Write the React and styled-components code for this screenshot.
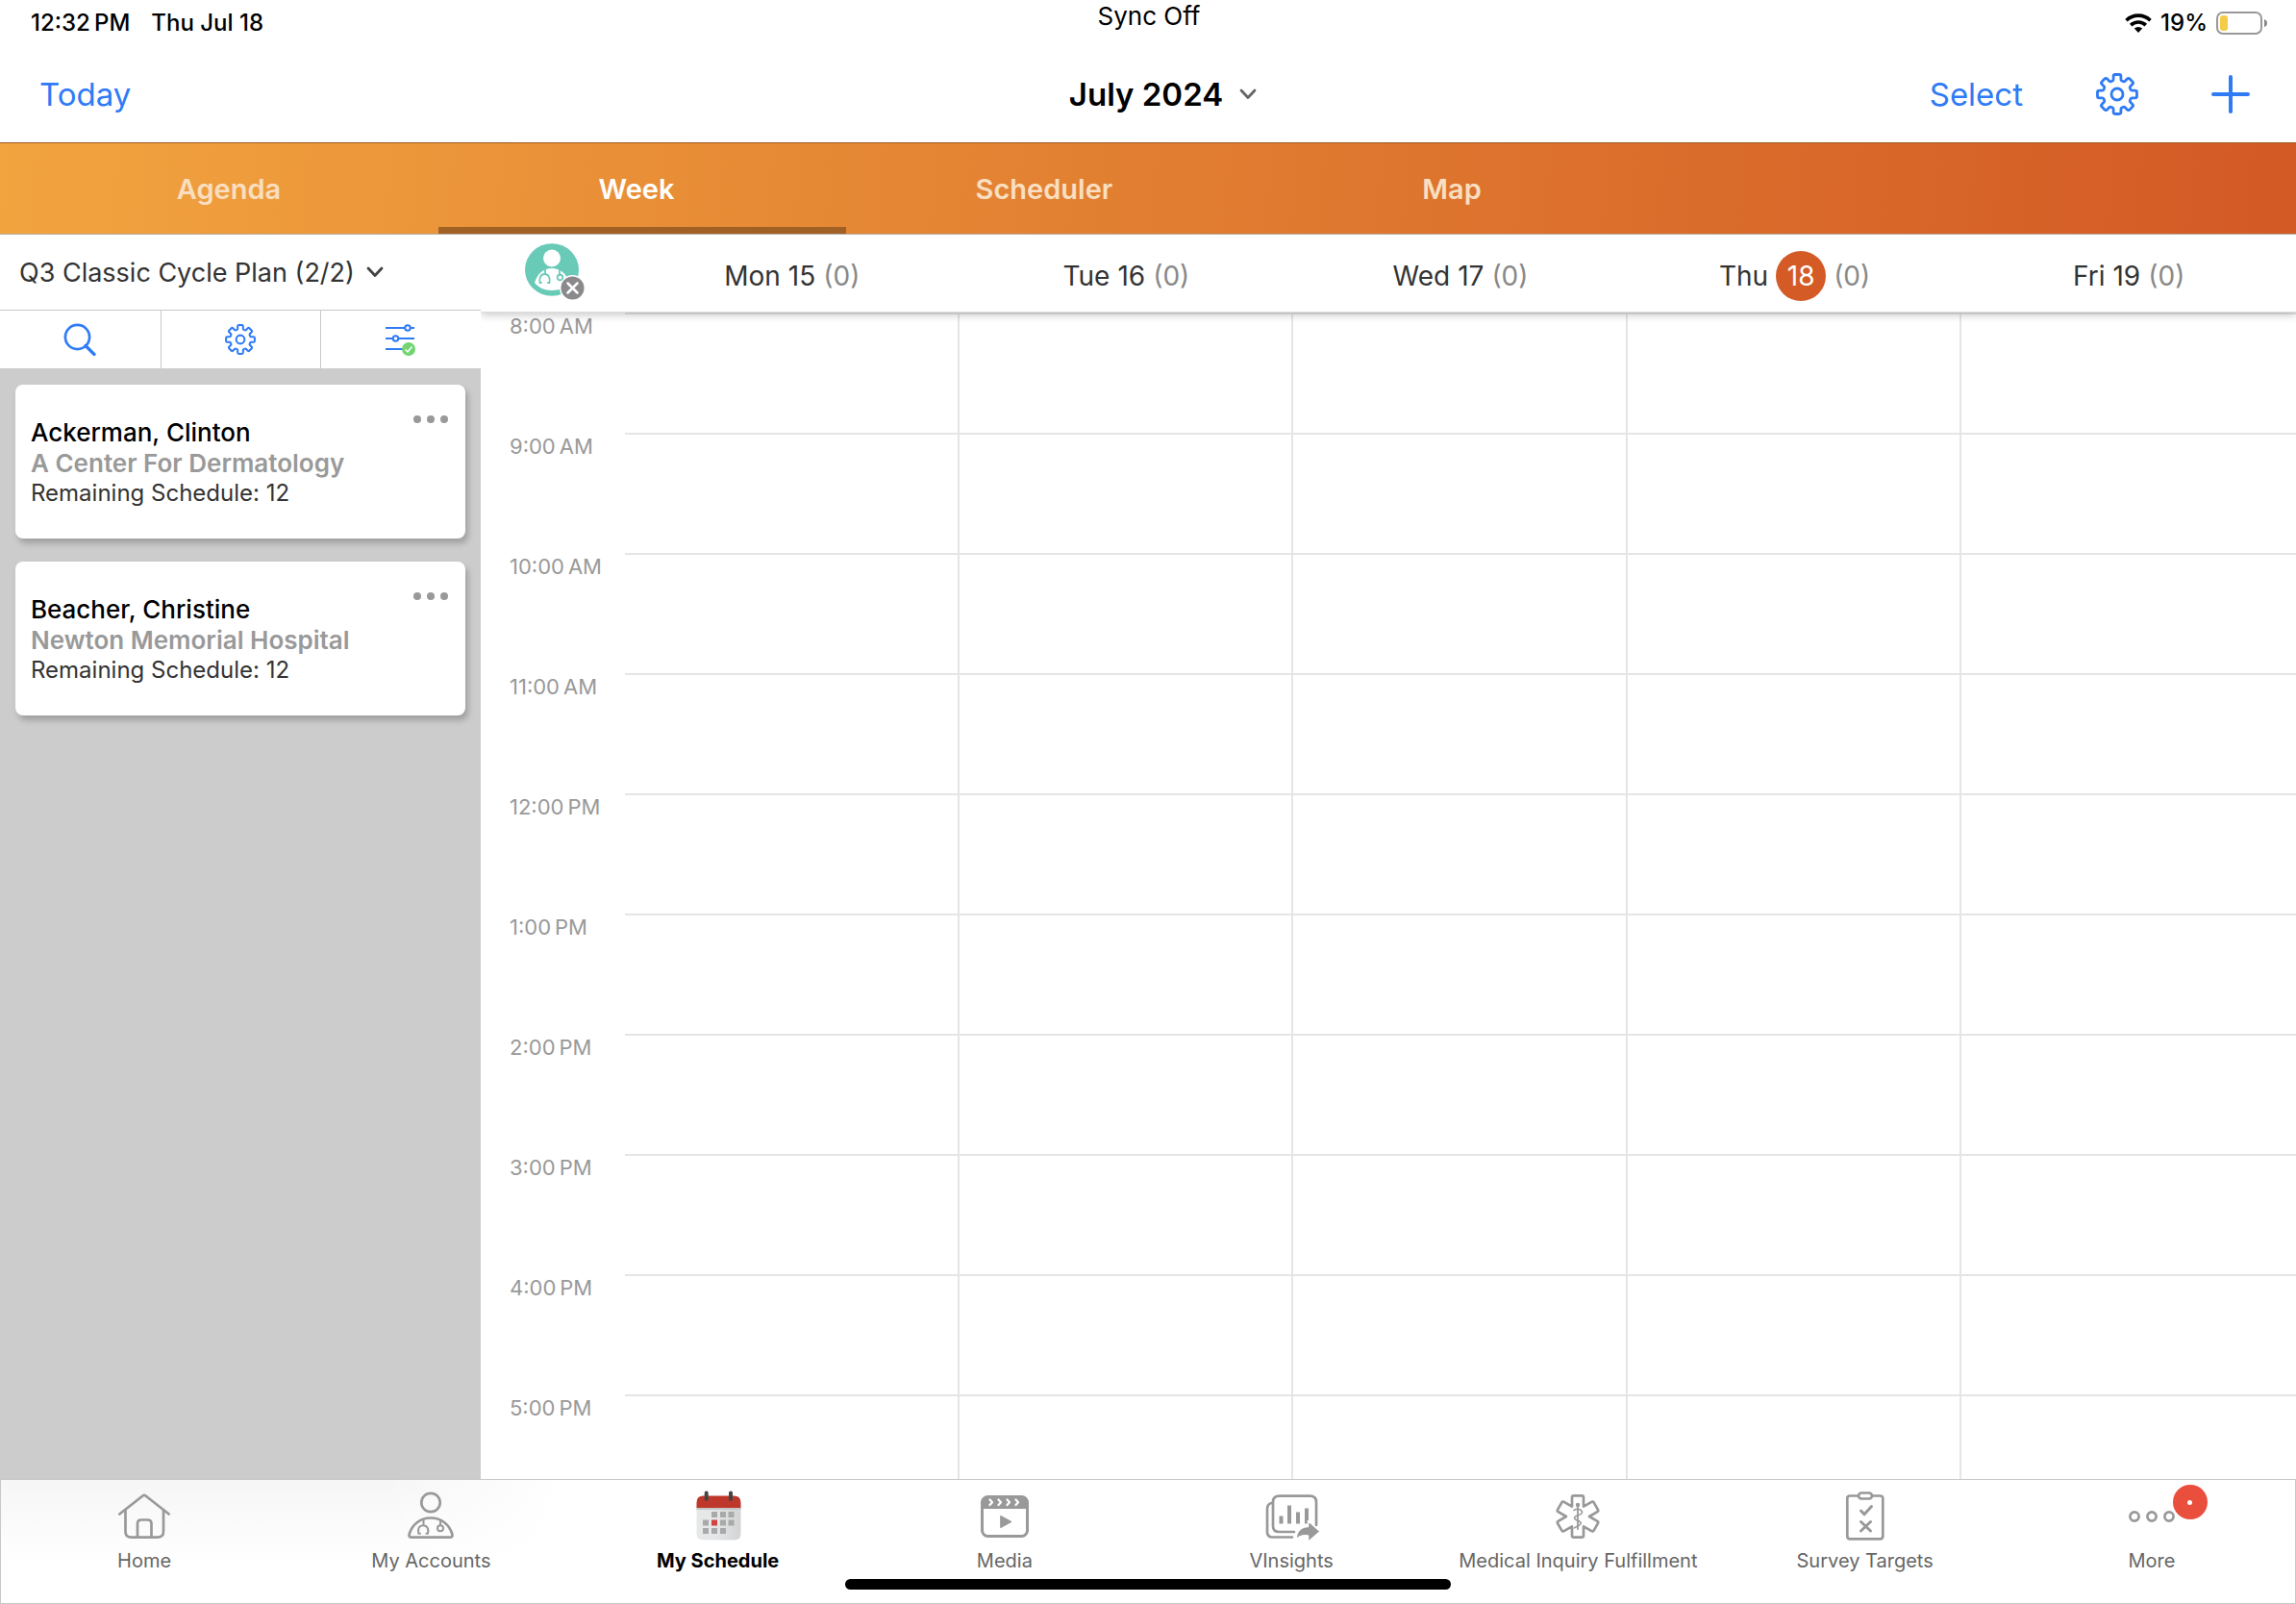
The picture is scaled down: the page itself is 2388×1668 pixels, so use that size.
import { useState } from "react";
import styled, { createGlobalStyle } from "styled-components";

const GlobalStyle = createGlobalStyle`
    * {
        box-sizing: border-box;
    }
    body {
        margin: 0;
        background: #fff;
        color: #333;
        font-family: Inter, "Liberation Sans", sans-serif;
    }
    button {
        padding: 0;
        border: none;
        background: none;
        color: inherit;
        font: inherit;
        cursor: pointer;
    }
    svg {
        display: block;
        flex: none;
    }
`;

const Page = styled.div`
    display: flex;
    flex-direction: column;
    height: 100vh;
    overflow: hidden;
`;

const StatusBar = styled.div`
    display: grid;
    grid-template-columns: 1fr auto 1fr;
    height: 48px;
    padding: 0 30px 0 32px;
    color: #000;
    font-size: 26px;
    line-height: 34px;
`;

const StatusLeft = styled.div`
    display: flex;
    gap: 22px;
    padding-top: 7px;
    font-size: 24px;
    font-weight: 500;
`;

const StatusRight = styled.div`
    display: flex;
    align-items: center;
    justify-content: flex-end;
    gap: 9px;
    height: 48px;
    font-size: 24px;
    font-weight: 500;
`;

const TitleBar = styled.header`
    display: grid;
    grid-template-columns: 1fr auto 1fr;
    align-items: center;
    height: 100px;
    padding: 0 48px 0 41px;
    font-size: 33px;
    line-height: 44px;
`;

const TextButton = styled.button`
    justify-self: start;
    color: #2f7bf6;
`;

const MonthButton = styled.button`
    display: flex;
    align-items: center;
    gap: 17px;
    padding-left: 38px;
    color: #000;
    font-weight: 600;
`;

const Actions = styled.div`
    display: flex;
    align-items: center;
    justify-content: flex-end;
    gap: 76px;
`;

const TabBar = styled.nav`
    display: flex;
    flex: none;
    height: 96px;
    padding-left: 32px;
    border-top: 1px solid #9c5a22;
    border-bottom: 1px solid #b5aba4;
    background: linear-gradient(95deg, #f2a43f, #e17e31 50%, #d35925);
`;

const Tab = styled.button`
    width: 424px;
    padding: 7px 12px 0 0;
    border-bottom: 7px solid ${(props) => (props.$active ? "#a16125" : "transparent")};
    color: ${(props) => (props.$active ? "#fff" : "#f9dfc0")};
    font-size: 29px;
    font-weight: 600;
`;

const Main = styled.main`
    display: flex;
    flex: 1;
    min-height: 0;
`;

const Sidebar = styled.aside`
    display: flex;
    flex: none;
    flex-direction: column;
    width: 500px;
    background: #ccc;
`;

const PlanButton = styled.button`
    display: flex;
    align-items: center;
    gap: 12px;
    height: 78px;
    padding: 0 20px;
    background: #fff;
    font-size: 27px;
`;

const ToolRow = styled.div`
    display: grid;
    grid-template-columns: repeat(3, 1fr);
    height: 61px;
    border-top: 1px solid #c8c8c8;
    background: #fff;
`;

const ToolButton = styled.button`
    display: flex;
    align-items: center;
    justify-content: center;

    & + & {
        border-left: 1px solid #c8c8c8;
    }
`;

const CardList = styled.div`
    display: flex;
    flex-direction: column;
    gap: 24px;
    padding: 17px 16px;
`;

const Card = styled.article`
    display: flex;
    justify-content: space-between;
    height: 160px;
    padding: 32px 18px 0 16px;
    border-radius: 8px;
    background: #fff;
    box-shadow: 3px 5px 6px rgba(0, 0, 0, 0.22);
    font-size: 24px;
    line-height: 30px;
`;

const AccountName = styled.div`
    padding-top: 2px;
    color: #000;
    font-size: 26px;
    font-weight: 500;
    line-height: 32px;
`;

const AccountPlace = styled.div`
    color: #999;
    font-size: 26px;
    font-weight: 600;
    line-height: 32px;
`;

const MoreButton = styled.button`
    display: flex;
    height: 8px;
`;

const Calendar = styled.section`
    flex: 1;
    min-width: 0;
    overflow: hidden;
`;

const WeekRow = styled.div`
    display: grid;
    grid-template-columns: 150px repeat(5, 1fr);
`;

const WeekHead = styled(WeekRow)`
    position: relative;
    height: 81px;
    border-bottom: 1px solid #ddd;
    background: #fff;
    box-shadow: 0 3px 8px rgba(0, 0, 0, 0.2);
    font-size: 28px;
`;

const AvatarButton = styled.button`
    display: flex;
    justify-content: center;
    padding: 9px 0 0 4px;
`;

const DayHead = styled.div`
    display: flex;
    align-items: center;
    justify-content: center;
    gap: 8px;
    padding-top: 6px;
`;

const DayLabel = styled.span`
    display: flex;
    align-items: center;
    gap: 8px;
`;

const TodayBadge = styled.span`
    display: flex;
    align-items: center;
    justify-content: center;
    width: 52px;
    height: 52px;
    border-radius: 50%;
    background: #d45b26;
    color: #fff;
`;

const DayCount = styled.span`
    color: #888;
`;

const HourLabel = styled.div`
    height: 125px;
    padding-left: 30px;
    color: #999;
    font-size: 22px;
    line-height: 28px;
`;

const HourCell = styled.div`
    border-top: 2px solid #e5e5e5;
    border-right: 2px solid #e5e5e5;

    &:last-child {
        border-right: none;
    }
`;

const BottomNav = styled.nav`
    position: relative;
    display: grid;
    flex: none;
    grid-template-columns: repeat(8, 1fr);
    height: 130px;
    border: 1px solid #c8c8c8;
    background: linear-gradient(to right, transparent 400px, #fff 580px), linear-gradient(#f6f6f6, #fff 88px);
`;

const NavItem = styled.a`
    display: flex;
    flex-direction: column;
    align-items: center;
    padding-top: 10px;
    color: ${(props) => (props.$active ? "#000" : "#666")};
    font-size: 20px;
    font-weight: ${(props) => (props.$active ? 700 : 400)};
    line-height: 36px;
    text-decoration: none;
    white-space: nowrap;
`;

const IconWrap = styled.span`
    position: relative;
`;

const Badge = styled.span`
    position: absolute;
    top: -5px;
    right: -28px;
    display: flex;
    align-items: center;
    justify-content: center;
    width: 36px;
    height: 36px;
    border-radius: 50%;
    background: #ea4e3d;

    &::after {
        content: "";
        width: 5px;
        height: 5px;
        border-radius: 50%;
        background: #fff;
    }
`;

const HomeIndicator = styled.div`
    position: absolute;
    bottom: 14px;
    left: 50%;
    width: 630px;
    height: 11px;
    border-radius: 6px;
    background: #000;
    transform: translateX(-50%);
`;

// repeats one arm of a shape around the origin and closes the outline
const radialPath = (count, arm) => {
    const points = [];
    for (let i = 0; i < count; i++) {
        const a = (i * 2 * Math.PI) / count;
        const rotate = ([x, y]) =>
            `${(x * Math.cos(a) - y * Math.sin(a)).toFixed(2)} ${(x * Math.sin(a) + y * Math.cos(a)).toFixed(2)}`;
        arm.forEach(([cmd, ...pts]) => points.push(cmd + pts.map(rotate).join(" ")));
    }
    return `M${points.join("").slice(1)}Z`;
};

const gearPath = radialPath(8, [
    ["L", [-4.8, -14]],
    ["Q", [-3.9, -14.4], [-3.9, -15.6]],
    ["L", [-3.9, -18.6]],
    ["Q", [-3.9, -20.5], [-2, -20.5]],
    ["L", [2, -20.5]],
    ["Q", [3.9, -20.5], [3.9, -18.6]],
    ["L", [3.9, -15.6]],
    ["Q", [3.9, -14.4], [4.8, -14]],
]);

const starPath = radialPath(6, [
    ["L", [-6, -10.4]],
    ["L", [-6, -20]],
    ["Q", [-6, -21.7], [-4, -21.7]],
    ["L", [4, -21.7]],
    ["Q", [6, -21.7], [6, -20]],
    ["L", [6, -10.4]],
]);

const GearIcon = ({ size, stroke }) => (
    <svg width={size} height={size} viewBox="-22 -22 44 44" fill="none" stroke="#2f7bf6" strokeWidth={stroke} strokeLinejoin="round">
        <path d={gearPath} />
        <circle r="6" />
    </svg>
);

const PlusIcon = () => (
    <svg width="40" height="40" viewBox="0 0 40 40" stroke="#2f7bf6" strokeWidth="4" strokeLinecap="round">
        <path d="M20 2v36M2 20h36" />
    </svg>
);

const ChevronIcon = ({ color }) => (
    <svg width="18" height="12" viewBox="0 0 18 12" fill="none" stroke={color} strokeWidth="2.8" strokeLinecap="round" strokeLinejoin="round">
        <path d="M2 2l7 7.5L16 2" />
    </svg>
);

const WifiIcon = () => (
    <svg width="28" height="20" viewBox="0 0 28 20" fill="none" stroke="#000" strokeWidth="3.6">
        <path d="M1.5 7.2a18 18 0 0 1 25 0" />
        <path d="M6.2 12.1a11.2 11.2 0 0 1 15.6 0" />
        <path d="M14 20l-4.2-4.4a6.3 6.3 0 0 1 8.4 0z" fill="#000" stroke="none" />
    </svg>
);

const BatteryIcon = () => (
    <svg width="53" height="24" viewBox="0 0 53 24">
        <rect x="1" y="1" width="46" height="22" rx="6" fill="none" stroke="#999" strokeWidth="2" />
        <rect x="4" y="4" width="8" height="16" rx="3" fill="#f6cc46" />
        <path d="M50 8q3 1 3 4t-3 4z" fill="#888" />
    </svg>
);

const SearchIcon = () => (
    <svg width="34" height="34" viewBox="0 0 34 34" fill="none" stroke="#2f7bf6" strokeWidth="2.7" strokeLinecap="round">
        <circle cx="14.5" cy="14.5" r="12.6" />
        <path d="M23 23.5l9 9" strokeWidth="3.2" />
    </svg>
);

const FilterIcon = () => (
    <svg width="32" height="34" viewBox="0 0 32 34" fill="none" stroke="#2f7bf6" strokeWidth="2">
        <path d="M0 5h30M0 16h30M0 27h18" />
        <circle cx="23" cy="5" r="2.8" fill="#fff" />
        <circle cx="10.5" cy="16" r="2.8" fill="#fff" />
        <circle cx="24" cy="27" r="7" fill="#72d572" stroke="none" />
        <path d="M20.5 27.5l2.5 2.5 4.5-5.5" stroke="#fff" strokeWidth="1.5" />
    </svg>
);

const EllipsisIcon = () => (
    <svg width="36" height="8" viewBox="0 0 36 8" fill="#999">
        <circle cx="4" cy="4" r="4" />
        <circle cx="18" cy="4" r="4" />
        <circle cx="32" cy="4" r="4" />
    </svg>
);

const AvatarIcon = () => (
    <svg width="62" height="60" viewBox="0 0 62 60">
        <ellipse cx="28" cy="27.5" rx="28" ry="27.2" fill="#69cab7" />
        <circle cx="28" cy="15.5" r="9" fill="#fff" />
        <path d="M10 41c3-10 10-15 18-15s15 5 18 15c-4 5-10 8-18 8s-14-3-18-8z" fill="#fff" />
        <g fill="none" stroke="#69cab7" strokeWidth="1.8" strokeLinecap="round">
            <path d="M21 26v6M17 41h-1.5c-1-5 1-9 5-9s6 4 5 9H24" />
            <path d="M36 26v7" />
            <circle cx="36.5" cy="35.5" r="2.8" />
        </g>
        <circle cx="49.5" cy="46.5" r="12.8" fill="#8a8a8d" stroke="#fff" strokeWidth="1.5" />
        <path d="M44.5 41.5l10 10M54.5 41.5l-10 10" stroke="#fff" strokeWidth="2.5" strokeLinecap="round" />
    </svg>
);

const NavSvg = ({ children }) => (
    <svg width="60" height="56" viewBox="-30 -28 60 56" fill="none" stroke="#999" strokeWidth="2.7" strokeLinecap="round" strokeLinejoin="round">
        {children}
    </svg>
);

const HomeIcon = () => (
    <NavSvg>
        <path d="M-25.7 -2.5L-1.5 -21.5Q0 -22.7 1.5 -21.5L25.7 -2.5" />
        <path d="M-19.5 -6V15.5Q-19.5 21.7 -13.5 21.7H13.5Q20 21.7 20 15.5V-6" />
        <path d="M-7 21V7.5Q-7 3.5 -3 3.5H3.5Q7.5 3.5 7.5 7.5V21" />
    </NavSvg>
);

const AccountsIcon = () => (
    <NavSvg>
        <circle cy="-14.5" r="9.7" />
        <path d="M0 1.5C11 1.5 19.5 8.5 22.4 18.5Q23 21.7 20 21.7H-20Q-23 21.7 -22.4 18.5C-19.5 8.5 -11 1.5 0 1.5Z" />
        <path d="M-7.5 3V9M-11 17.8H-12.7C-14 12 -11.5 9.3 -8 9.3S-1.5 12 -3 17.8H-4.7M10 4V9" strokeWidth="2" />
        <circle cx="10" cy="12.3" r="3" strokeWidth="2" />
    </NavSvg>
);

const ScheduleIcon = () => (
    <NavSvg>
        <defs>
            <linearGradient id="calendarPaper">
                <stop offset="0.4" stopColor="#e6e7e8" />
                <stop offset="1" stopColor="#d2d3d4" />
            </linearGradient>
        </defs>
        <g stroke="none">
            <path d="M-22.5 -10H23.5V17.5Q23.5 24.5 16.5 24.5H-15.5Q-22.5 24.5 -22.5 17.5Z" fill="url(#calendarPaper)" />
            <path d="M-22.5 -10H23.5V-7H-22.5Z" fill="#c4c5c6" />
            <path d="M-22.5 -9V-14.5Q-22.5 -21.5 -15.5 -21.5H16.5Q23.5 -21.5 23.5 -14.5V-9Z" fill="#bf372b" />
            {[-5, 3.5, 12].map((y, row) =>
                [-16, -7, 2, 10.5].map((x, col) =>
                    (row === 0 && col === 0) || (row === 2 && col === 3) ? null : (
                        <rect key={x} x={x} y={y} width="6" height="6" fill={row === 1 && col === 1 ? "#cf4540" : "#a9a9a9"} />
                    )
                )
            )}
        </g>
        <path d="M-12.3 -24.5V-18M13 -24.5V-18" stroke="#444" strokeWidth="4" />
    </NavSvg>
);

const MediaIcon = () => (
    <NavSvg>
        <rect x="-23.5" y="-20.5" width="47" height="41" rx="6" strokeWidth="3" />
        <path d="M-24 -8V-15Q-24 -21 -18 -21H18Q24 -21 24 -15V-8Z" fill="#999" stroke="none" />
        <path d="M-15.5 -17.5l2.5 2.8-2.5 2.8M-6.5 -17.5l2.5 2.8-2.5 2.8M2.5 -17.5l2.5 2.8-2.5 2.8M11.5 -17.5l2.5 2.8-2.5 2.8" stroke="#fff" strokeWidth="2.2" />
        <path d="M-4 -0.5L7 5.5L-4 11.5Z" fill="#999" strokeWidth="1" />
    </NavSvg>
);

const InsightsIcon = () => (
    <NavSvg>
        <path d="M-20.5 -14Q-25 -13 -25 -8V16Q-25 21.5 -19.5 21.5H1" />
        <path d="M3 16H-12.5Q-19 16 -19 10V-15Q-19 -21.3 -12.5 -21.3H19.5Q26 -21.3 26 -15V9" />
        <path d="M-10.5 -0.5V7.5M-2 -11.5V7.5M7 -4.5V7.5M16 -8.5V7.5" strokeWidth="4" strokeLinecap="butt" />
        <path d="M5 24C5 14.5 11 10.5 17.5 10.5V4.5L30 15.5L17.5 26.5V20C12 19 8 20.5 5 24Z" fill="#999" stroke="#fff" strokeWidth="1.5" />
    </NavSvg>
);

const MedicalIcon = () => (
    <NavSvg>
        <path d={starPath} />
        <circle cy="-12" r="2.2" fill="#999" stroke="none" />
        <path d="M0 -10V13" strokeWidth="1.8" />
        <path d="M-4 -6.5C0 -9 5 -7 4.5 -4S-3.5 -1.5 -3.5 1.5S3.5 4 3.2 7S-1.5 10 -3.5 12" strokeWidth="1.5" />
    </NavSvg>
);

const SurveyIcon = () => (
    <NavSvg>
        <path d="M-7 -21.5H-16Q-18.7 -21.5 -18.7 -18.7V20.5Q-18.7 23.3 -16 23.3H15.5Q18.3 23.3 18.3 20.5V-18.7Q18.3 -21.5 15.5 -21.5H7" />
        <rect x="-7" y="-24.5" width="14" height="6" rx="3" />
        <path d="M-4.5 -6l3.5 3.8L6.5 -10.5M-4.5 5.5L5.5 15M5.5 5.5L-4.5 15" strokeWidth="3" />
    </NavSvg>
);

const MoreIcon = () => (
    <NavSvg>
        <circle cx="-18" r="4.6" />
        <circle r="4.6" />
        <circle cx="18" r="4.6" />
    </NavSvg>
);

const tabs = ["Agenda", "Week", "Scheduler", "Map"];

const accounts = [
    { name: "Ackerman, Clinton", place: "A Center For Dermatology", remaining: 12 },
    { name: "Beacher, Christine", place: "Newton Memorial Hospital", remaining: 12 },
];

const days = [
    { name: "Mon", date: 15, count: 0 },
    { name: "Tue", date: 16, count: 0 },
    { name: "Wed", date: 17, count: 0 },
    { name: "Thu", date: 18, count: 0, today: true },
    { name: "Fri", date: 19, count: 0 },
];

const hours = ["8:00\u202fAM", "9:00\u202fAM", "10:00\u202fAM", "11:00\u202fAM", "12:00\u202fPM", "1:00\u202fPM", "2:00\u202fPM", "3:00\u202fPM", "4:00\u202fPM", "5:00\u202fPM"];

const navItems = [
    { label: "Home", Icon: HomeIcon },
    { label: "My Accounts", Icon: AccountsIcon },
    { label: "My Schedule", Icon: ScheduleIcon, active: true },
    { label: "Media", Icon: MediaIcon },
    { label: "VInsights", Icon: InsightsIcon },
    { label: "Medical Inquiry Fulfillment", Icon: MedicalIcon },
    { label: "Survey Targets", Icon: SurveyIcon },
    { label: "More", Icon: MoreIcon, badge: true },
];

const App = () => {
    const [activeTab, setActiveTab] = useState("Week");

    return (
        <Page>
            <GlobalStyle />
            <StatusBar>
                <StatusLeft>
                    <span>12:32{"\u202f"}PM</span>
                    <span>Thu Jul 18</span>
                </StatusLeft>
                <div>Sync Off</div>
                <StatusRight>
                    <WifiIcon />
                    <span>19%</span>
                    <BatteryIcon />
                </StatusRight>
            </StatusBar>
            <TitleBar>
                <TextButton>Today</TextButton>
                <MonthButton>
                    July 2024
                    <ChevronIcon color="#666" />
                </MonthButton>
                <Actions>
                    <TextButton>Select</TextButton>
                    <button aria-label="Settings">
                        <GearIcon size={44} stroke={2.8} />
                    </button>
                    <button aria-label="Add">
                        <PlusIcon />
                    </button>
                </Actions>
            </TitleBar>
            <TabBar>
                {tabs.map((tab) => (
                    <Tab key={tab} $active={tab === activeTab} onClick={() => setActiveTab(tab)}>
                        {tab}
                    </Tab>
                ))}
            </TabBar>
            <Main>
                <Sidebar>
                    <PlanButton>
                        Q3 Classic Cycle Plan (2/2)
                        <ChevronIcon color="#444" />
                    </PlanButton>
                    <ToolRow>
                        <ToolButton aria-label="Search">
                            <SearchIcon />
                        </ToolButton>
                        <ToolButton aria-label="Plan settings">
                            <GearIcon size={32} stroke={2.8} />
                        </ToolButton>
                        <ToolButton aria-label="Filter">
                            <FilterIcon />
                        </ToolButton>
                    </ToolRow>
                    <CardList>
                        {accounts.map((account) => (
                            <Card key={account.name}>
                                <div>
                                    <AccountName>{account.name}</AccountName>
                                    <AccountPlace>{account.place}</AccountPlace>
                                    <div>Remaining Schedule: {account.remaining}</div>
                                </div>
                                <MoreButton aria-label="More options">
                                    <EllipsisIcon />
                                </MoreButton>
                            </Card>
                        ))}
                    </CardList>
                </Sidebar>
                <Calendar>
                    <WeekHead>
                        <AvatarButton aria-label="Clear account filter">
                            <AvatarIcon />
                        </AvatarButton>
                        {days.map((day) => (
                            <DayHead key={day.name}>
                                <DayLabel>
                                    {day.name} {day.today ? <TodayBadge>{day.date}</TodayBadge> : <span>{day.date}</span>}
                                </DayLabel>
                                <DayCount>({day.count})</DayCount>
                            </DayHead>
                        ))}
                    </WeekHead>
                    {hours.map((hour) => (
                        <WeekRow key={hour}>
                            <HourLabel>{hour}</HourLabel>
                            {days.map((day) => (
                                <HourCell key={day.name} />
                            ))}
                        </WeekRow>
                    ))}
                </Calendar>
            </Main>
            <BottomNav>
                {navItems.map(({ label, Icon, active, badge }) => (
                    <NavItem key={label} href="#" $active={active}>
                        <IconWrap>
                            <Icon />
                            {badge && <Badge />}
                        </IconWrap>
                        {label}
                    </NavItem>
                ))}
                <HomeIndicator />
            </BottomNav>
        </Page>
    );
};

export default App;
